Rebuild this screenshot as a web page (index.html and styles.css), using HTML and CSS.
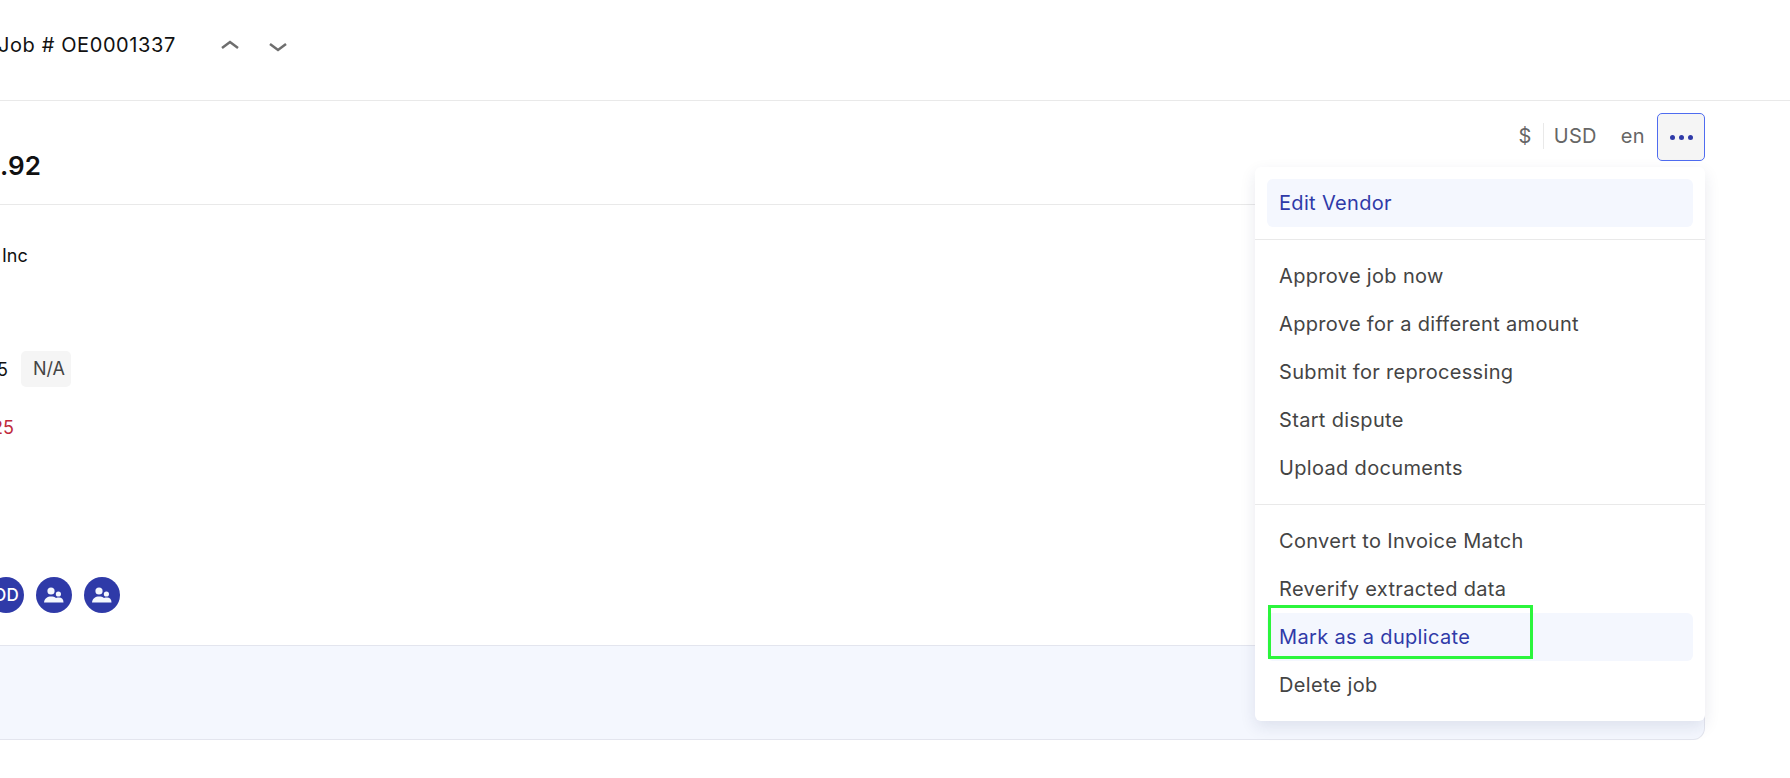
FILE: index.html
```html
<!DOCTYPE html>
<html lang="en">
<head>
    <meta charset="UTF-8">
    <title>Job # OE0001337</title>
    <link rel="stylesheet" href="styles.css">
</head>
<body>
    <header class="topbar">
        <span class="job-no">Job # OE0001337</span>
        <div class="pager">
            <svg viewBox="0 0 20 14" width="20" height="14"><path d="M2 10 L10 4 L18 10"/></svg>
            <svg viewBox="0 0 20 14" width="20" height="14"><path d="M2 6 L10 12 L18 6"/></svg>
        </div>
    </header>
    <main class="card">
        <div class="summary">
            <div class="amount">.92</div>
            <div class="meta">
                <span class="symbol">$</span>
                <span class="currency">USD</span>
                <span class="lang">en</span>
                <button class="more"><i></i><i></i><i></i></button>
            </div>
        </div>
        <div class="details">
            <div class="vendor">Inc</div>
            <div class="terms"><span class="terms-val">5</span><span class="chip">N/A</span></div>
            <div class="due">25</div>
            <div class="people">
                <span class="avatar avatar-cut">OD</span>
                <span class="avatar">
                    <svg viewBox="0 0 20 16" width="20" height="16"><circle cx="7" cy="4" r="3.6"/><circle cx="14.4" cy="7" r="2.6"/><path d="M0 15.5 C0.5 11.5 3.5 9.6 7 9.6 C9 9.6 10.6 10 12 11 C13 10.7 14 10.6 15 10.6 C17.8 10.6 19.5 12.5 19.5 15.5 Z"/></svg>
                </span>
                <span class="avatar">
                    <svg viewBox="0 0 20 16" width="20" height="16"><circle cx="7" cy="4" r="3.6"/><circle cx="14.4" cy="7" r="2.6"/><path d="M0 15.5 C0.5 11.5 3.5 9.6 7 9.6 C9 9.6 10.6 10 12 11 C13 10.7 14 10.6 15 10.6 C17.8 10.6 19.5 12.5 19.5 15.5 Z"/></svg>
                </span>
            </div>
        </div>
        <div class="band"></div>
    </main>
    <div class="menu">
        <div class="menu-group">
            <div class="menu-item active">Edit Vendor</div>
        </div>
        <div class="menu-group">
            <div class="menu-item">Approve job now</div>
            <div class="menu-item">Approve for a different amount</div>
            <div class="menu-item">Submit for reprocessing</div>
            <div class="menu-item">Start dispute</div>
            <div class="menu-item">Upload documents</div>
        </div>
        <div class="menu-group">
            <div class="menu-item">Convert to Invoice Match</div>
            <div class="menu-item">Reverify extracted data</div>
            <div class="menu-item active">Mark as a duplicate<span class="highlight"></span></div>
            <div class="menu-item">Delete job</div>
        </div>
    </div>
</body>
</html>
```

FILE: styles.css
```css
html, body {
    margin: 0;
    padding: 0;
}
body {
    position: relative;
    width: 1790px;
    height: 778px;
    overflow: hidden;
    background: #fff;
    font-family: Inter, "Liberation Sans", sans-serif;
    font-size: 18px;
    color: #111;
}
.topbar {
    display: flex;
    align-items: center;
    height: 100px;
    box-sizing: content-box;
    border-bottom: 1px solid #e9e9e9;
}
.job-no {
    margin-left: -2px;
    margin-bottom: 10px;
    font-size: 20px;
    letter-spacing: 0.6px;
}
.pager {
    display: flex;
    gap: 28px;
    margin-left: 44px;
    margin-bottom: 10px;
}
.pager svg {
    display: block;
}
.pager path {
    fill: none;
    stroke: #6e6e6e;
    stroke-width: 2.5;
}
.card {
    width: 1705px;
    height: 639px;
    display: flex;
    flex-direction: column;
}
.summary {
    display: flex;
    justify-content: space-between;
    height: 104px;
    border-bottom: 1px solid #e9e9e9;
    box-sizing: border-box;
}
.amount {
    margin-top: 49px;
    font-size: 26px;
    line-height: 32px;
    font-weight: 600;
}
.meta {
    display: flex;
    align-items: center;
    height: 48px;
    margin-top: 12px;
    color: #666;
    font-size: 20px;
    letter-spacing: 0.33px;
}
.symbol {
    margin-bottom: 3px;
    padding-right: 11px;
}
.currency {
    margin-bottom: 3px;
    padding-left: 10px;
    border-left: 1px solid #e9e9e9;
    line-height: 26px;
}
.lang {
    margin-bottom: 3px;
    margin-left: 24px;
}
.more {
    display: flex;
    align-items: center;
    justify-content: center;
    gap: 4px;
    width: 48px;
    height: 48px;
    margin-left: 12px;
    padding: 0;
    background: #f5f5f5;
    border: 1px solid #4f6cf0;
    border-radius: 5px;
}
.more i {
    width: 5px;
    height: 5px;
    border-radius: 50%;
    background: #2f3aa8;
}
.details {
    flex: 1;
    font-size: 18px;
}
.vendor {
    margin-top: 40px;
    margin-left: 2px;
    line-height: 22px;
}
.terms {
    display: flex;
    align-items: center;
    margin-top: 84px;
    margin-left: -3px;
}
.terms-val {
    width: 24px;
}
.chip {
    width: 50px;
    height: 36px;
    line-height: 36px;
    box-sizing: border-box;
    padding-left: 12px;
    background: #f5f5f5;
    border-radius: 5px;
    color: #444;
}
.due {
    margin-top: 30px;
    margin-left: -8px;
    line-height: 22px;
    color: #c02a3c;
}
.people {
    display: flex;
    gap: 12px;
    margin-top: 138px;
    margin-left: -12px;
}
.avatar {
    display: flex;
    align-items: center;
    justify-content: center;
    width: 36px;
    height: 36px;
    border-radius: 50%;
    background: #2f3aa8;
    color: #fff;
    font-size: 17px;
    font-weight: 500;
}
.avatar svg {
    display: block;
    fill: #f4f7fe;
}
.band {
    height: 95px;
    background: #f4f7fe;
    border-top: 1px solid #e3e5ee;
    border-right: 1px solid #e3e5ee;
    border-bottom: 1px solid #e3e5ee;
    border-bottom-right-radius: 12px;
    box-sizing: border-box;
}
.menu {
    position: absolute;
    left: 1255px;
    top: 167px;
    width: 450px;
    box-sizing: border-box;
    background: #fff;
    border-radius: 6px;
    box-shadow: 0 6px 16px rgba(30, 40, 90, 0.1);
}
.menu-group {
    padding: 12px;
    border-bottom: 1px solid #e9e9e9;
}
.menu-group:last-child {
    border-bottom: 0;
}
.menu-item {
    position: relative;
    height: 48px;
    line-height: 48px;
    padding-left: 12px;
    border-radius: 6px;
    font-size: 20px;
    letter-spacing: 0.33px;
    color: #444;
}
.menu-item.active {
    background: #f4f7fe;
    color: #2f3aa8;
}
.highlight {
    position: absolute;
    left: 1px;
    top: -8px;
    width: 265px;
    height: 54px;
    box-sizing: border-box;
    border: 3px solid #2bf53c;
}
```
